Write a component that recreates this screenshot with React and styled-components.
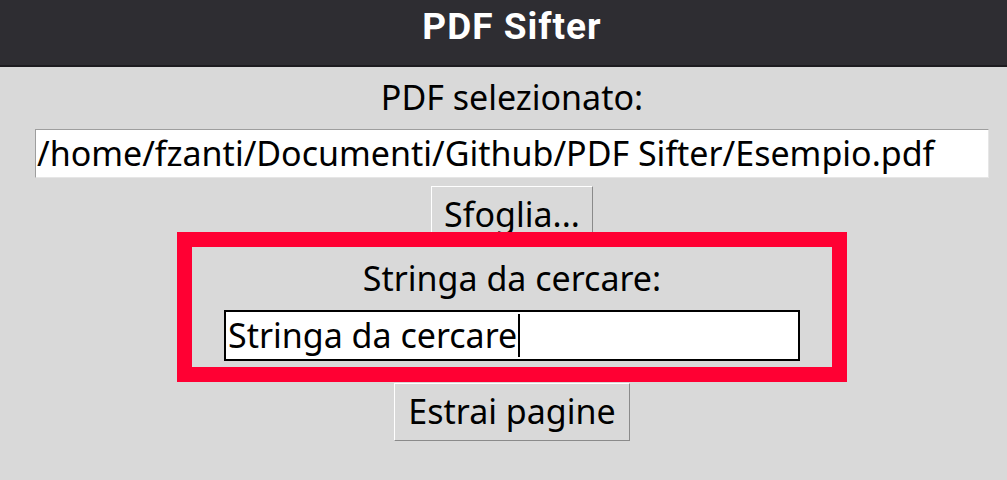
import React from "react";
import styled, { createGlobalStyle } from "styled-components";

const GlobalStyle = createGlobalStyle`
  html, body {
    margin: 0;
    padding: 0;
    background: #d9d9d9;
    overflow: hidden;
  }
  body {
    font-family: "Noto Sans", "DejaVu Sans", sans-serif;
    color: #000;
  }
`;

const Window = styled.div`
  width: 1007px;
  height: 480px;
  display: flex;
  flex-direction: column;
  background: #d9d9d9;
`;

const HeaderBar = styled.header`
  box-sizing: border-box;
  height: 67px;
  border-bottom: 2px solid #1d1c20;
  background: #2e2d32;
  display: flex;
  align-items: center;
  justify-content: center;
  padding: 0 0 12px 17px;
`;

const Title = styled.h1`
  margin: 0;
  font-family: Roboto, "Liberation Sans", sans-serif;
  font-weight: 700;
  font-size: 37px;
  line-height: 1;
  color: #ffffff;
  letter-spacing: 1px;
`;

const Content = styled.main`
  display: flex;
  flex-direction: column;
  align-items: center;
  padding: 8px 0 0 17px;
`;

const Label = styled.div`
  font-size: 34px;
  line-height: 45px;
  white-space: nowrap;
  margin-bottom: ${({ gap }) => gap}px;
`;

const Entry = styled.div`
  box-sizing: border-box;
  width: ${({ w }) => w}px;
  height: ${({ h }) => h}px;
  background: #ffffff;
  font-size: 34px;
  line-height: 45px;
  white-space: nowrap;
  overflow: hidden;
  display: flex;
  align-items: center;
  ${({ sunken }) =>
    sunken
      ? `
    border-top: 1px solid #9e9e9e;
    border-left: 1px solid #9e9e9e;
    border-bottom: 1px solid #e6e6e6;
    border-right: 1px solid #e6e6e6;
    padding-left: 1px;
  `
      : `
    border: 2px solid #000;
    padding-left: 2px;
  `}
`;

const Caret = styled.span`
  display: inline-block;
  width: 2px;
  height: 43px;
  background: #000;
  margin-left: 1px;
`;

const Button = styled.button`
  box-sizing: border-box;
  height: 58px;
  margin-top: ${({ top }) => top || 0}px;
  padding: 5px ${({ px }) => px}px 6px;
  font-family: "Noto Sans", "DejaVu Sans", sans-serif;
  font-size: 34px;
  line-height: 45px;
  color: #000;
  background: #d9d9d9;
  border-top: 1px solid #ffffff;
  border-left: 1px solid #ffffff;
  border-bottom: 1px solid #8a8a8a;
  border-right: 1px solid #8a8a8a;
  border-radius: 0;
  cursor: pointer;
  white-space: nowrap;
`;

const SearchFrame = styled.section`
  position: relative;
  z-index: 1;
  box-sizing: border-box;
  width: 670px;
  height: 150px;
  margin-top: -12px;
  border: 15px solid #ff0033;
  background: #d9d9d9;
  display: flex;
  flex-direction: column;
  align-items: center;
  padding-top: 9px;
`;

export default function App() {
  return (
    <>
      <GlobalStyle />
      <Window>
        <HeaderBar>
          <Title>PDF Sifter</Title>
        </HeaderBar>
        <Content>
          <Label gap={9}>PDF selezionato:</Label>
          <Entry sunken w={954} h={49}>
            /home/fzanti/Documenti/Github/PDF Sifter/Esempio.pdf
          </Entry>
          <Button top={8} px={12}>
            Sfoglia...
          </Button>
          <SearchFrame>
            <Label gap={9}>Stringa da cercare:</Label>
            <Entry w={576} h={51}>
              Stringa da cercare
              <Caret />
            </Entry>
          </SearchFrame>
          <Button top={1} px={13}>
            Estrai pagine
          </Button>
        </Content>
      </Window>
    </>
  );
}
